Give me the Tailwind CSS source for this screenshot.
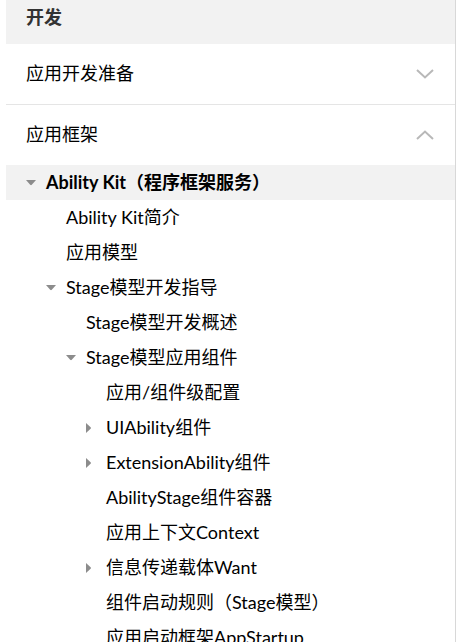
<!DOCTYPE html>
<html lang="zh-CN">
<head>
<meta charset="utf-8">
<meta name="viewport" content="width=device-width, initial-scale=1">
<title>开发</title>
<script src="https://cdn.jsdelivr.net/npm/@tailwindcss/browser@4"></script>
</head>
<body class="h-screen overflow-hidden bg-white pl-1.5 pr-3.5 font-[Lato,'Noto_Sans_CJK_SC',sans-serif] text-[18px] leading-[35px] text-black">
<svg class="hidden">
  <symbol id="open" viewBox="0 0 10 6"><path d="M0 0H10L5.8 4.8Q5 5.6 4.2 4.8Z" fill="#8c8c8c"/></symbol>
  <symbol id="closed" viewBox="0 0 6 10"><path d="M0 0V10L4.6 5.8Q5.4 5 4.6 4.2Z" fill="#8c8c8c"/></symbol>
</svg>
<nav class="min-h-full border-r border-[#d8d8d8]" aria-label="开发">
  <h1 class="bg-[#f2f2f2] px-5 pb-[9px] font-bold text-[#333]">开发</h1>
  <button type="button" class="flex w-full items-center justify-between border-b border-[#e5e5e5] px-5 pt-3 pb-[13px] text-left" aria-expanded="false">
    <span>应用开发准备</span>
    <svg class="h-3 w-5" viewBox="0 0 20 12" fill="none" stroke="#b8b8b8" stroke-width="2"><path d="M2 2L10 9.5L18 2"/></svg>
  </button>
  <button type="button" class="flex w-full items-center justify-between px-5 pt-3 pb-[13px] text-left" aria-expanded="true">
    <span>应用框架</span>
    <svg class="h-3 w-5" viewBox="0 0 20 12" fill="none" stroke="#b8b8b8" stroke-width="2"><path d="M2 10L10 2.5L18 10"/></svg>
  </button>
  <ul class="whitespace-nowrap">
    <li>
      <div class="flex bg-[#f2f2f2] pl-5 font-bold">
        <button type="button" class="flex w-5 items-center" aria-label="收起 Ability Kit" aria-expanded="true"><svg class="h-1.5 w-2.5"><use href="#open"/></svg></button>
        <a href="#ability-kit">Ability Kit（程序框架服务）</a>
      </div>
      <ul class="pl-10">
        <li class="pl-5"><a href="#intro">Ability Kit简介</a></li>
        <li class="pl-5"><a href="#model">应用模型</a></li>
        <li>
          <div class="flex">
            <button type="button" class="flex w-5 items-center" aria-label="收起 Stage模型开发指导" aria-expanded="true"><svg class="h-1.5 w-2.5"><use href="#open"/></svg></button>
            <a href="#stage">Stage模型开发指导</a>
          </div>
          <ul class="pl-5">
            <li class="pl-5"><a href="#stage-overview">Stage模型开发概述</a></li>
            <li>
              <div class="flex">
                <button type="button" class="flex w-5 items-center" aria-label="收起 Stage模型应用组件" aria-expanded="true"><svg class="h-1.5 w-2.5"><use href="#open"/></svg></button>
                <a href="#stage-components">Stage模型应用组件</a>
              </div>
              <ul class="pl-5">
                <li class="pl-5"><a href="#config">应用/组件级配置</a></li>
                <li class="flex">
                  <button type="button" class="flex w-5 items-center" aria-label="展开 UIAbility组件" aria-expanded="false"><svg class="h-2.5 w-1.5"><use href="#closed"/></svg></button>
                  <a href="#uiability">UIAbility组件</a>
                </li>
                <li class="flex">
                  <button type="button" class="flex w-5 items-center" aria-label="展开 ExtensionAbility组件" aria-expanded="false"><svg class="h-2.5 w-1.5"><use href="#closed"/></svg></button>
                  <a href="#extensionability">ExtensionAbility组件</a>
                </li>
                <li class="pl-5"><a href="#abilitystage">AbilityStage组件容器</a></li>
                <li class="pl-5"><a href="#context">应用上下文Context</a></li>
                <li class="flex">
                  <button type="button" class="flex w-5 items-center" aria-label="展开 信息传递载体Want" aria-expanded="false"><svg class="h-2.5 w-1.5"><use href="#closed"/></svg></button>
                  <a href="#want">信息传递载体Want</a>
                </li>
                <li class="pl-5"><a href="#rules">组件启动规则（Stage模型）</a></li>
                <li class="pl-5"><a href="#appstartup">应用启动框架AppStartup</a></li>
              </ul>
            </li>
          </ul>
        </li>
      </ul>
    </li>
  </ul>
</nav>
</body>
</html>
